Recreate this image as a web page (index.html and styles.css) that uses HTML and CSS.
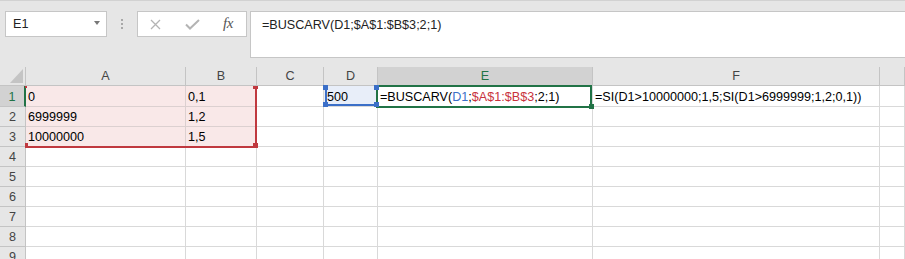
FILE: index.html
```html
<!DOCTYPE html>
<html lang="es">
<head>
<meta charset="utf-8">
<title>BUSCARV</title>
<link rel="stylesheet" href="styles.css">
</head>
<body>
<div class="toolbar">
  <div class="namebox"><span>E1</span><span class="caret"></span></div>
  <div class="sep"><i></i><i></i><i></i></div>
  <div class="fxbox">
    <svg class="ic-x" width="11" height="11" viewBox="0 0 11 11"><path d="M1 1 L10 10 M10 1 L1 10" stroke="#b4b4b4" stroke-width="1.3" fill="none"/></svg>
    <svg class="ic-ok" width="15" height="11" viewBox="0 0 15 11"><path d="M1 5.5 L5 9.5 L14 1" stroke="#b4b4b4" stroke-width="2" fill="none"/></svg>
    <span class="fx">fx</span>
  </div>
  <div class="formula">=BUSCARV(D1;$A$1:$B$3;2;1)</div>
</div>

<div class="sheet">
  <div class="corner"><svg width="13" height="14" viewBox="0 0 13 14"><path d="M13 0 L13 14 L0 14 Z" fill="#c4c4c4"/></svg></div>
  <div class="ch">A</div><div class="ch">B</div><div class="ch">C</div><div class="ch">D</div><div class="ch sel">E</div><div class="ch">F</div><div class="ch"></div>

  <div class="rh sel r1">1</div>
  <div class="c ref r1">0</div><div class="c ref r1">0,1</div><div class="c r1"></div><div class="c refd r1">500</div>
  <div class="c r1">=BUSCARV(<span class="tb">D1</span>;<span class="tr">$A$1:$B$3</span>;2;1)</div>
  <div class="c r1">=SI(D1&gt;10000000;1,5;SI(D1&gt;6999999;1,2;0,1))</div><div class="c r1"></div>

  <div class="rh">2</div>
  <div class="c ref">6999999</div><div class="c ref">1,2</div><div class="c"></div><div class="c"></div><div class="c"></div><div class="c"></div><div class="c"></div>

  <div class="rh">3</div>
  <div class="c ref">10000000</div><div class="c ref">1,5</div><div class="c"></div><div class="c"></div><div class="c"></div><div class="c"></div><div class="c"></div>

  <div class="rh">4</div>
  <div class="c"></div><div class="c"></div><div class="c"></div><div class="c"></div><div class="c"></div><div class="c"></div><div class="c"></div>

  <div class="rh">5</div>
  <div class="c"></div><div class="c"></div><div class="c"></div><div class="c"></div><div class="c"></div><div class="c"></div><div class="c"></div>

  <div class="rh">6</div>
  <div class="c"></div><div class="c"></div><div class="c"></div><div class="c"></div><div class="c"></div><div class="c"></div><div class="c"></div>

  <div class="rh">7</div>
  <div class="c"></div><div class="c"></div><div class="c"></div><div class="c"></div><div class="c"></div><div class="c"></div><div class="c"></div>

  <div class="rh">8</div>
  <div class="c"></div><div class="c"></div><div class="c"></div><div class="c"></div><div class="c"></div><div class="c"></div><div class="c"></div>

  <div class="rh">9</div>
  <div class="c"></div><div class="c"></div><div class="c"></div><div class="c"></div><div class="c"></div><div class="c"></div><div class="c"></div>

  <!-- reference range A1:B3 (red) -->
  <div class="red red-r"></div>
  <div class="red red-b"></div>
  <div class="red red-tl"></div>
  <div class="red red-tr"></div>
  <div class="red red-bl"></div>
  <div class="red red-br"></div>

  <!-- active cell E1 -->
  <div class="active"></div>
  <div class="handle"></div>

  <!-- reference D1 (blue) -->
  <div class="blue blue-l"></div>
  <div class="blue blue-b"></div>
  <div class="blue bsq bsq-tl"></div>
  <div class="blue bsq bsq-tr"></div>
  <div class="blue bsq bsq-bl"></div>
  <div class="blue bsq bsq-br"></div>
</div>
</body>
</html>
```

FILE: styles.css
```css
html, body {
  margin: 0;
  padding: 0;
  background: #ffffff;
}
body {
  width: 905px;
  height: 259px;
  overflow: hidden;
  font-family: "Liberation Sans", Arial, sans-serif;
  font-size: 12.6px;
  color: #000;
}

/* ---------- formula bar ---------- */
.toolbar {
  height: 67px;
  box-sizing: border-box;
  background: #e6e6e6;
  border-top: 1px solid #d2d2d2;
  padding-top: 10px;
  display: flex;
  align-items: flex-start;
}
.namebox {
  margin-left: 5px;
  width: 102px;
  height: 26px;
  box-sizing: border-box;
  background: #fff;
  border: 1px solid #c6c6c6;
  display: flex;
  align-items: center;
  justify-content: space-between;
  padding: 0 6px 0 7px;
  line-height: 15px;
  color: #222;
}
.caret {
  width: 0;
  height: 0;
  border-left: 3.5px solid transparent;
  border-right: 3.5px solid transparent;
  border-top: 4px solid #777;
  margin-top: -2px;
}
.sep {
  width: 30px;
  height: 26px;
  display: flex;
  flex-direction: column;
  align-items: center;
  justify-content: center;
  gap: 2px;
}
.sep i {
  display: block;
  width: 2px;
  height: 2px;
  background: #a8a8a8;
}
.fxbox {
  width: 110px;
  height: 26px;
  box-sizing: border-box;
  background: #fff;
  border: 1px solid #c6c6c6;
  display: flex;
  align-items: center;
  padding-left: 12px;
}
.ic-x { margin-right: 24px; }
.ic-ok { margin-right: 23px; }
.fx {
  font-family: "Liberation Serif", "Times New Roman", serif;
  font-style: italic;
  font-size: 15px;
  color: #555;
  letter-spacing: -0.5px;
  margin-top: -2px;
}
.formula {
  flex: 1;
  margin-left: 3px;
  margin-right: -6px;
  height: 47px;
  box-sizing: border-box;
  background: #fff;
  border: 1px solid #c6c6c6;
  padding: 6px 0 0 11px;
  line-height: 15px;
  color: #222;
}

/* ---------- sheet grid ---------- */
.sheet {
  position: relative;
  display: grid;
  grid-template-columns: 26px 160px 71px 67px 54px 215px 287px 25px;
  grid-template-rows: 19px 21px repeat(8, 20px);
  line-height: 15px;
}
.corner, .ch, .rh {
  background: #e6e6e6;
  border-right: 1px solid #c4c4c4;
  border-bottom: 1px solid #c4c4c4;
  box-sizing: border-box;
  color: #444;
}
.corner {
  display: flex;
  align-items: flex-end;
  justify-content: flex-end;
  padding: 0 2px 2px 0;
}
.ch {
  display: flex;
  align-items: center;
  justify-content: center;
}
.ch.sel {
  background: #d2d2d2;
  color: #217346;
}
.rh {
  display: flex;
  align-items: flex-end;
  justify-content: center;
  padding-bottom: 1px;
}
.rh.sel {
  background: #d2d2d2;
  color: #217346;
  border-right: 2px solid #217346;
}
.c {
  border-right: 1px solid #d9d9d9;
  border-bottom: 1px solid #d9d9d9;
  box-sizing: border-box;
  display: flex;
  align-items: flex-end;
  padding: 0 0 1px 2px;
  white-space: nowrap;
}
.c.ref { background: #f9e8e8; border-color: #dcd0d0; }
.c.refd { background: #e8eef9; padding-left: 3px; }
.tb { color: #3b6fc8; }
.tr { color: #c8323c; }

/* ---------- reference / selection outlines ---------- */
.red, .blue, .active, .handle { position: absolute; }
.red { background: #c0393f; }
.red-r  { left: 255px; top: 19px; width: 2px; height: 62px; }
.red-b  { left: 26px;  top: 79px; width: 231px; height: 2px; }
.red-tl { left: 25px;  top: 19px; width: 2px; height: 2px; }
.red-tr { left: 253px; top: 19px; width: 5px; height: 3px; }
.red-bl { left: 25px;  top: 76px; width: 3px; height: 5px; }
.red-br { left: 253px; top: 76px; width: 5px; height: 5px; }

.active {
  left: 376px;
  top: 18px;
  width: 216px;
  height: 23px;
  box-sizing: border-box;
  border: 2px solid #217346;
}
.handle {
  left: 589px;
  top: 37px;
  width: 5px;
  height: 5px;
  background: #217346;
}

.blue { background: #3b6fc8; }
.blue-l { left: 325px; top: 20px; width: 2px; height: 19px; }
.blue-b { left: 325px; top: 37px; width: 51px; height: 2px; }
.bsq { width: 5px; height: 5px; }
.bsq-tl { left: 323px; top: 18px; }
.bsq-tr { left: 374px; top: 18px; }
.bsq-bl { left: 323px; top: 35px; }
.bsq-br { left: 374px; top: 35px; }
```
